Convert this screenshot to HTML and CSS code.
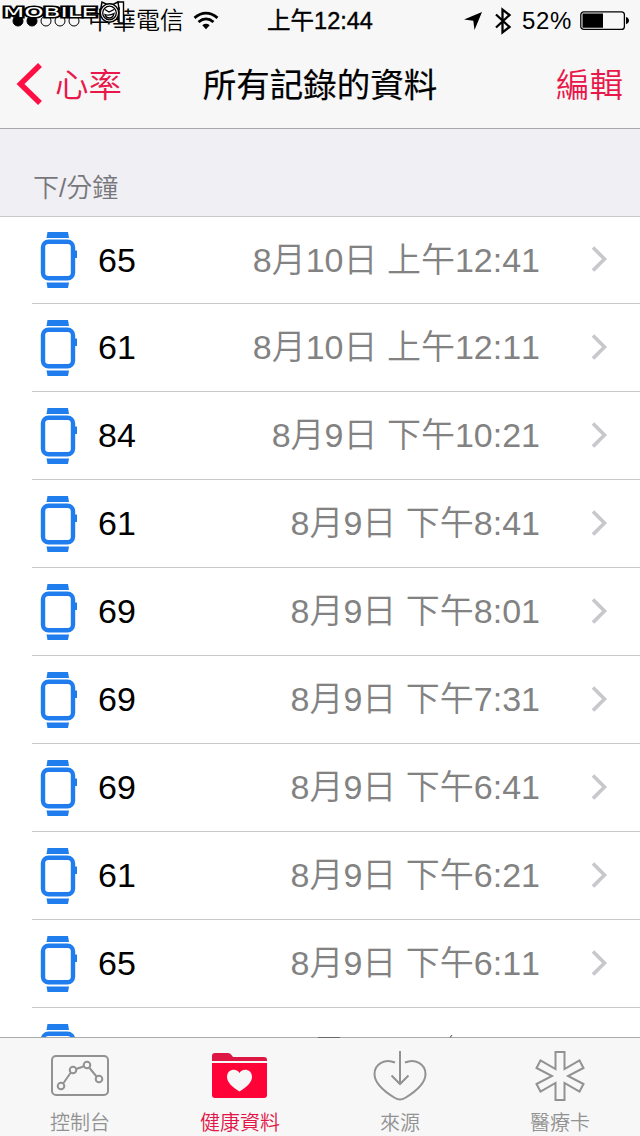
FILE: index.html
```html
<!DOCTYPE html>
<html lang="zh-Hant">
<head>
<meta charset="utf-8">
<title>心率</title>
<link rel="stylesheet" href="styles.css">
</head>
<body>
<svg width="0" height="0" class="defs">
  <symbol id="watch" viewBox="0 0 38 56">
    <path d="M7.500 0H28L29 6H6.500ZM6.500 50.500H29L28 56H7.500Z" fill="#1f7ded"/>
    <rect x="3" y="9.700" width="30" height="36.600" rx="5.500" fill="none" stroke="#1f7ded" stroke-width="4.400"/>
    <path d="M33 18.500H37V26H33Z" fill="#1f7ded"/>
  </symbol>
  <symbol id="chevron" viewBox="0 0 18 28"><path d="M2 2.500L13.500 14L2 25.500" fill="none" stroke="#c7c7cc" stroke-width="3.600"/></symbol>
</svg>
<div class="screen">
  <div class="status">
    <div class="carrier">
      <svg class="dots" width="70" height="14" viewBox="0 0 70 14"><g stroke="#000" stroke-width="1"><circle cx="6" cy="7" r="5"/><circle cx="20" cy="7" r="5"/><g fill="none"><circle cx="34" cy="7" r="5"/><circle cx="48" cy="7" r="5"/><circle cx="62" cy="7" r="5"/></g></g></svg>
      <span class="provider">中華電信</span>
      <svg width="26" height="20" viewBox="0 0 26 20"><g fill="none" stroke="#000" stroke-width="2.800"><path d="M1.500 6.800Q13 -2.500 24.500 6.800"/><path d="M5.500 11Q13 4.800 20.500 11"/></g><path d="M9.300 14.200Q13 11.400 16.700 14.200L13 18.300Z"/></svg>
    </div>
    <div class="clock">上午12:44</div>
    <div class="indicators">
      <svg class="arrow" width="18" height="18" viewBox="0 0 18 18"><path d="M18 0L10.500 18L9.300 8.700L0 7.500Z"/></svg>
      <svg class="bluetooth" width="18" height="28" viewBox="0 0 18 28"><path d="M2 7.500L15.500 20L8.500 25.500V2.500L15.500 8L2 20.500" fill="none" stroke="#000" stroke-width="2.300"/></svg>
      <span class="percent">52%</span>
      <svg class="battery" width="50" height="20" viewBox="0 0 50 20"><rect x=".8" y=".8" width="43.600" height="17.600" rx="3" fill="none" stroke="#000" stroke-width="1.300"/><path d="M2.500 2.500H23V16.700H2.500ZM46 6Q49 7 49 9.600T46 13.200Z"/></svg>
    </div>
    <svg class="watermark" width="130" height="26" viewBox="0 0 130 26">
      <g class="logo-text"><text transform="translate(3 17)" textLength="94" lengthAdjust="spacingAndGlyphs">MOBILE</text></g>
      <path d="M118 2H123.500V23H119V8H117Z" fill="#fff" stroke="#000" stroke-width="1.400"/>
      <path d="M100.500 10L102 2L107 4.500Q110 3.500 113 4.500L118 2L119 9Z" fill="#fff" stroke="#000" stroke-width="1.500"/>
      <circle cx="109.500" cy="13" r="9.200" fill="#fff" stroke="#000" stroke-width="1.500"/>
      <circle cx="109.500" cy="13" r="6.800" fill="#fff" stroke="#000" stroke-width="1.300"/>
      <path d="M105 9.500L109 12L114 9.500M105 14.500Q109.500 16 114 13.500Q113 18 109.500 18T105 14.500Z" fill="none" stroke="#000" stroke-width="1.300"/>
    </svg>
  </div>
  <div class="nav">
    <div class="back"><svg width="26" height="42" viewBox="0 0 26 42"><path d="M24 2L4.500 21L24 40" fill="none" stroke="#ff0f43" stroke-width="5.500"/></svg><span>心率</span></div>
    <div class="title">所有記錄的資料</div>
    <div class="edit">編輯</div>
  </div>
  <div class="section">下/分鐘</div>
  <div class="list">
    <div class="row"><svg class="watch"><use href="#watch"/></svg><span class="rate">65</span><span class="date">8月10日 上午12:41</span><svg class="chevron"><use href="#chevron"/></svg></div>
    <div class="row"><svg class="watch"><use href="#watch"/></svg><span class="rate">61</span><span class="date">8月10日 上午12:11</span><svg class="chevron"><use href="#chevron"/></svg></div>
    <div class="row"><svg class="watch"><use href="#watch"/></svg><span class="rate">84</span><span class="date">8月9日 下午10:21</span><svg class="chevron"><use href="#chevron"/></svg></div>
    <div class="row"><svg class="watch"><use href="#watch"/></svg><span class="rate">61</span><span class="date">8月9日 下午8:41</span><svg class="chevron"><use href="#chevron"/></svg></div>
    <div class="row"><svg class="watch"><use href="#watch"/></svg><span class="rate">69</span><span class="date">8月9日 下午8:01</span><svg class="chevron"><use href="#chevron"/></svg></div>
    <div class="row"><svg class="watch"><use href="#watch"/></svg><span class="rate">69</span><span class="date">8月9日 下午7:31</span><svg class="chevron"><use href="#chevron"/></svg></div>
    <div class="row"><svg class="watch"><use href="#watch"/></svg><span class="rate">69</span><span class="date">8月9日 下午6:41</span><svg class="chevron"><use href="#chevron"/></svg></div>
    <div class="row"><svg class="watch"><use href="#watch"/></svg><span class="rate">61</span><span class="date">8月9日 下午6:21</span><svg class="chevron"><use href="#chevron"/></svg></div>
    <div class="row"><svg class="watch"><use href="#watch"/></svg><span class="rate">65</span><span class="date">8月9日 下午6:11</span><svg class="chevron"><use href="#chevron"/></svg></div>
    <div class="row"><svg class="watch"><use href="#watch"/></svg></div>
  </div>
  <div class="tabs">
    <svg class="peek" width="140" height="3" viewBox="0 0 140 3"><path d="M4 2.500H26M136 2.500L138 0" fill="none" stroke="#6a6a6a" stroke-width="1.200"/></svg>
    <div class="tab"><svg width="60" height="54" viewBox="50 1050 60 54"><g fill="none" stroke="#929292" stroke-width="2"><rect x="52" y="1056" width="56" height="39" rx="4"/><path d="M63.500 1083L70.500 1073M76 1069L83.500 1066.500M89.500 1068L96.500 1076.500"/><g><circle cx="61" cy="1086" r="3.300"/><circle cx="73" cy="1070" r="3.300"/><circle cx="87" cy="1065" r="3.300"/><circle cx="99" cy="1079" r="3.300"/></g></g></svg><span>控制台</span></div>
    <div class="tab active"><svg width="60" height="54" viewBox="210 1050 60 54"><path d="M212 1061V1056Q212 1053 215 1053H228Q230 1053 231.500 1055L233 1057H264Q267 1057 267 1060V1061Z" fill="#dd1644"/><path d="M212 1063H267V1095Q267 1098 264 1098H215Q212 1098 212 1095Z" fill="#ff0238"/><path d="M239.500 1091.500C232 1087 227 1082 227 1077C227 1069.500 236 1067.500 239.500 1073C243 1067.500 252 1069.500 252 1077C252 1082 247 1087 239.500 1091.500Z" fill="#f7f7f7"/></svg><span>健康資料</span></div>
    <div class="tab"><svg width="60" height="54" viewBox="370 1050 60 54"><path d="M395 1062.500C385 1058 374.500 1064 374.500 1074C374.500 1084 385 1092 395 1098Q400 1101 405 1098C415 1092 425.500 1084 425.500 1074C425.500 1064 415 1058 405 1062.500M400 1051V1083M391.500 1075.500L400 1084L408.500 1075.500" fill="none" stroke="#929292" stroke-width="2"/></svg><span>來源</span></div>
    <div class="tab"><svg width="60" height="54" viewBox="530 1050 60 54"><path d="M555.500 1052H564.500V1069L579.500 1060.500L583.500 1068L568 1076L583.500 1084L579.500 1091.500L564.500 1083V1100H555.500V1083L540.500 1091.500L536.500 1084L552 1076L536.500 1068L540.500 1060.500L555.500 1069Z" fill="none" stroke="#929292" stroke-width="2"/></svg><span>醫療卡</span></div>
  </div>
</div>
</body>
</html>
```
FILE: styles.css
```css
* { box-sizing: border-box; }
body { margin: 0; font-family: "Liberation Sans", "Noto Sans CJK TC", sans-serif; font-weight: 350; font-kerning: none; }
svg { display: block; flex: none; }
.defs { position: absolute; }
.screen { width: 640px; height: 1136px; display: flex; flex-direction: column; overflow: hidden; background: #fff; }
.status { position: relative; height: 40px; flex: none; display: grid; grid-template-columns: 240px 160px 240px; background: #f7f7f7; color: #000; }
.carrier { display: flex; align-items: center; padding-left: 12px; }
.provider { font-size: 24px; line-height: 40px; padding-top: 1px; margin-left: 6px; margin-right: 9px; white-space: nowrap; }
.clock { font-size: 23.500px; line-height: 40px; padding-top: 1px; text-align: center; font-weight: 400; -webkit-text-stroke: .4px #000; }
.indicators { display: flex; align-items: center; padding-left: 64px; }
.bluetooth { margin-left: 12px; }
.percent { font-size: 24px; line-height: 40px; margin-left: 10px; letter-spacing: .7px; width: 58px; white-space: nowrap; }
.watermark { position: absolute; left: 0; top: 0; }
.logo-text text { font: 14px "DejaVu Sans", sans-serif; fill: #fff; stroke: #000; stroke-width: 3.200px; paint-order: stroke; }
.nav { height: 89px; flex: none; display: grid; grid-template-columns: 180px 280px 180px; background: #f7f7f7; border-bottom: 1px solid #a7a7ac; font-size: 33.500px; line-height: 92px; white-space: nowrap; }
.back { display: flex; padding-left: 16px; color: #e8184a; }
.back svg { margin-top: 23px; }
.back span { margin-left: 13px; }
.title { text-align: center; font-weight: 400; color: #000; -webkit-text-stroke: .2px #000; }
.edit { text-align: right; padding-right: 17px; color: #e8184a; }
.section { height: 88px; flex: none; padding: 39px 0 0 33px; font-size: 26px; line-height: 40px; color: #77777b; background: #efeff4; border-bottom: 1px solid #c8c7cc; }
.list { flex: 1; min-height: 0; overflow: hidden; }
.row { height: 88px; margin-left: 32px; display: flex; border-bottom: 1px solid #c8c7cc; font-size: 34px; line-height: 87px; white-space: nowrap; }
.row:first-child { height: 87px; }
.row:first-child > svg { margin-top: 15px; }
.row:first-child > .chevron { margin-top: 28px; }
.watch { width: 38px; height: 56px; margin: 16px 0 0 8px; }
.rate { margin-left: 20px; color: #000; }
.date { margin-left: auto; margin-right: 51px; color: #828282; }
.chevron { width: 18px; height: 28px; margin: 29px 31px 0 0; }
.tabs { position: relative; height: 99px; flex: none; display: grid; grid-template-columns: repeat(4, 1fr); background: #f7f7f7; border-top: 1px solid #ababab; }
.peek { position: absolute; left: 314px; top: -3px; }
.tab { display: flex; flex-direction: column; align-items: center; padding-top: 12px; color: #929292; font-size: 20px; line-height: 28px; }
.tab span { margin-top: 5px; }
.tab.active { color: #e21546; }
```
